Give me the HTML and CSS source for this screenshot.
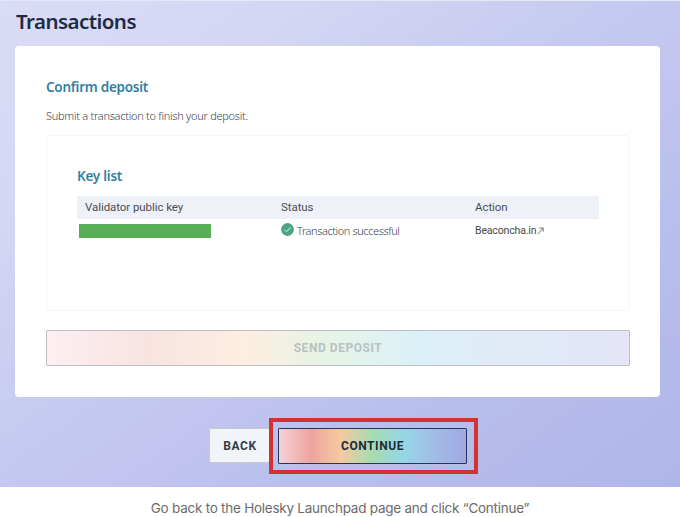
FILE: index.html
```html
<!DOCTYPE html>
<html lang="en">
<head>
<meta charset="utf-8">
<title>Transactions</title>
<link rel="stylesheet" href="styles.css">
</head>
<body>
<main class="page">
  <h1 class="title">Transactions</h1>
  <section class="card">
    <h2 class="heading confirm">Confirm deposit</h2>
    <p class="intro">Submit a transaction to finish your deposit.</p>
    <div class="keys">
      <h2 class="heading keylist">Key list</h2>
      <div class="row head">
        <span class="h-key">Validator public key</span><span class="h-status">Status</span><span class="h-action">Action</span>
      </div>
      <div class="row">
        <span><i class="redacted"></i></span>
        <span class="status">
          <svg width="13" height="13" viewBox="0 0 13 13"><circle cx="6.5" cy="6.5" r="6.4" fill="#4da583"/><path d="M3.6 6.9 5.5 8.7 9.6 4.3" fill="none" stroke="#e4f4ec" stroke-width="1"/></svg>
          <span class="status-text">Transaction successful</span>
        </span>
        <a class="link"><span>Beaconcha.in</span><svg width="7" height="8" viewBox="0 0 7 8"><path d="M.7 7.2 6 1.2M2.3 1H6.2V4.8" fill="none" stroke="#555" stroke-width=".8"/></svg></a>
      </div>
    </div>
    <button class="btn send"><span>SEND DEPOSIT</span></button>
  </section>
  <div class="actions">
    <button class="btn back"><span>BACK</span></button>
    <div class="highlight"><button class="btn continue"><span>CONTINUE</span></button></div>
  </div>
</main>
<p class="caption"><span>Go back to the Holesky Launchpad page and click “Continue”</span></p>
</body>
</html>
```
FILE: styles.css
```css
* { box-sizing: border-box; }
body { margin: 0; background: #fff; width: 680px; height: 517px; overflow: hidden; font-family: "Noto Sans", sans-serif; }
h1, h2, p { margin: 0; }
.page {
  height: 487px; padding: 0 19px 0 15px; border-top: 1px solid #e6e7f8;
  background: linear-gradient(144deg, #dadcf6 0%, #d5d6f4 22%, #cccff0 36%, #c4c9f0 48%, #c3c3ef 59%, #bac1ed 67%, #b5baeb 84%, #afb6ea 100%);
}
.title { height: 45px; padding: 5px 0 0 1px; font-size: 20.5px; line-height: 30px; font-weight: 600; color: #1c2b45; letter-spacing: -.55px; }
.card { width: 645px; height: 351px; padding: 31px 30px 0 31px; background: #fff; border-radius: 4px; }
.heading { font-size: 13.5px; line-height: 20px; font-weight: 600; color: #337fa3; letter-spacing: -.25px; }
.intro { margin-top: 9px; height: 20px; line-height: 20px; font-size: 11px; font-weight: 300; color: #36434f; letter-spacing: -.27px; }
.keys { margin-top: 9px; height: 176px; padding: 30px 30px 0; border: 1px solid #f5f5f6; border-radius: 4px; }
.row { display: grid; grid-template-columns: 204px 194px 1fr; height: 23px; align-items: center; }
.head { margin-top: 1px; padding-bottom: 1px; background: #eff1f9; font: 11.5px Roboto, sans-serif; color: #4a4d55; letter-spacing: -.07px; }
.keylist { height: 29px; line-height: 20px; }
.h-key { padding-left: 8px; }
.redacted { display: block; width: 132px; height: 14px; margin-left: 2px; background: #59ad57; }
.status { display: flex; align-items: center; gap: 3px; font-size: 11px; font-weight: 300; color: #36434f; letter-spacing: -.41px; }
.status svg { margin-top: -3px; }
.link { display: flex; align-items: center; gap: 1px; font: 10.5px Roboto, sans-serif; color: #474747; letter-spacing: -.15px; }
.btn { display: block; height: 36px; padding: 0; font: 700 12px Roboto, sans-serif; letter-spacing: .55px; text-align: center; border-radius: 1px; }
.send {
  width: 584px; margin-top: 19px; border: 1px solid #bdc0c8; color: #b8c1c4;
  background: linear-gradient(90deg, #fceff2 0%, #f8e3e1 17%, #fdeee0 34%, #e4f4e6 49%, #dcf1f7 63%, #e0ebf7 78%, #e4e5f8 100%);
}
.actions { display: flex; padding: 21px 0 0 194px; }
.back { width: 60px; height: 35px; margin-top: 10px; padding-left: 1px; border: 1px solid #c8cad2; border-right: 0; background: #f1f4f9; color: #343c48; }
.highlight { width: 209px; height: 56px; padding: 6px 5px; border: 4px solid #d43131; }
.continue {
  width: 189px; border: 1px solid #293259; color: #1d2b3e;
  background: linear-gradient(90deg, #f5d1d5 0%, #eda49e 17%, #f6c99f 33%, #a6dcb1 50%, #95d6e7 67%, #a1bde6 83%, #a1a7e3 100%);
}
.caption { height: 30px; padding-top: 11px; text-align: center; font: 13.5px/20px Inter, sans-serif; color: #6b6b6b; letter-spacing: -.25px; }
```
